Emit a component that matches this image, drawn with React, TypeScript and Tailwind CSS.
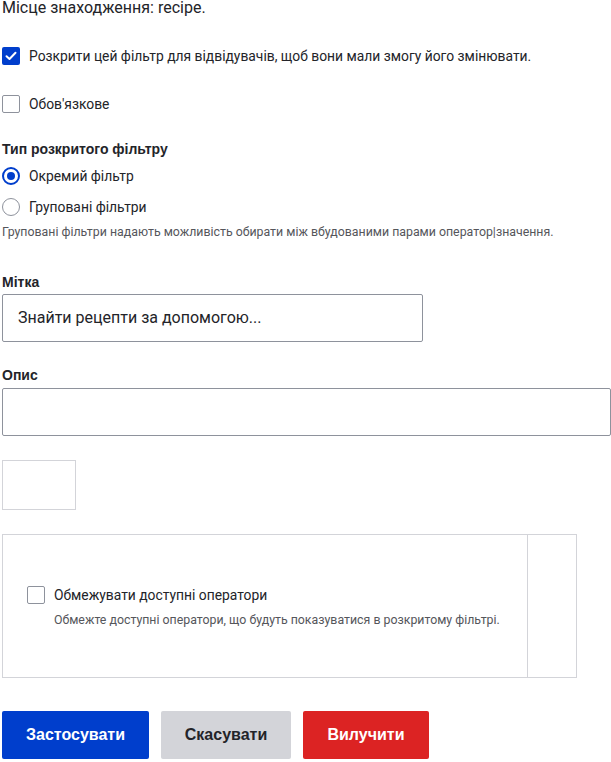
import React from "react";

const Checkbox: React.FC<{ checked?: boolean }> = ({ checked }) =>
  checked ? (
    <span className="flex h-[18px] w-[18px] shrink-0 items-center justify-center rounded-[2px] bg-[#003ecc]">
      <svg width="12" height="10" viewBox="0 0 12 10" fill="none">
        <path d="M1.5 5.2 4.5 8 10.5 1.8" stroke="#fff" strokeWidth="2" strokeLinecap="round" strokeLinejoin="round" />
      </svg>
    </span>
  ) : (
    <span className="block h-[18px] w-[18px] shrink-0 rounded-[2px] border border-[#8e929c] bg-white" />
  );

const Radio: React.FC<{ checked?: boolean }> = ({ checked }) =>
  checked ? (
    <span className="flex h-[18px] w-[18px] shrink-0 items-center justify-center rounded-full border-2 border-[#003ecc] bg-white">
      <span className="block h-2 w-2 rounded-full bg-[#003ecc]" />
    </span>
  ) : (
    <span className="block h-[18px] w-[18px] shrink-0 rounded-full border border-[#8e929c] bg-white" />
  );

export default function App() {
  return (
    <div className="flex w-[611px] flex-col bg-white pl-[2px] font-['Roboto',sans-serif] text-[#232429]">
      {/* location */}
      <div className="h-4 text-base leading-4">Місце знаходження: recipe.</div>

      {/* expose */}
      <label className="mt-[31px] flex h-[18px] items-center gap-[9px] text-[13.85px] leading-5">
        <Checkbox checked />
        <span>Розкрити цей фільтр для відвідувачів, щоб вони мали змогу його змінювати.</span>
      </label>

      <label className="mt-[30px] flex h-[18px] items-center gap-[9px] text-[13.85px] leading-5">
        <Checkbox />
        <span>Обов'язкове</span>
      </label>

      {/* filter type */}
      <div className="mt-[26px] h-5 font-['Liberation_Sans',Arial,sans-serif] text-sm font-bold leading-5">
        Тип розкритого фільтру
      </div>
      <label className="mt-2 flex h-[18px] items-center gap-[9px] text-[13.85px] leading-5">
        <Radio checked />
        <span>Окремий фільтр</span>
      </label>
      <label className="mt-[13px] flex h-[18px] items-center gap-[9px] text-[13.85px] leading-5">
        <Radio />
        <span>Груповані фільтри</span>
      </label>
      <div className="mt-2 h-4 text-[12.35px] leading-4 text-[#55565b]">
        Груповані фільтри надають можливість обирати між вбудованими парами оператор|значення.
      </div>

      {/* label */}
      <div className="mt-8 h-5 font-['Liberation_Sans',Arial,sans-serif] text-sm font-bold leading-5">Мітка</div>
      <div className="mt-[2px] flex h-12 w-[421px] items-center rounded-[2px] border border-[#8e929c] pl-[15px] text-base">
        Знайти рецепти за допомогою...
      </div>

      {/* description */}
      <div className="mt-[23px] h-5 font-['Liberation_Sans',Arial,sans-serif] text-sm font-bold leading-5">Опис</div>
      <div className="mt-[3px] h-12 w-[609px] rounded-[2px] border border-[#8e929c]" />

      <div className="mt-6 h-[50px] w-[74px] border border-[#d3d4d9]" />

      {/* operators */}
      <div className="mt-6 flex w-[575px] border border-[#d3d4d9]">
        <div className="flex-1 border-r border-[#d3d4d9] pb-[49px] pl-6 pt-[51px]">
          <label className="flex h-[18px] items-center gap-[9px] text-[13.85px] leading-5">
            <Checkbox />
            <span>Обмежувати доступні оператори</span>
          </label>
          <div className="mt-2 h-4 pl-[27px] text-[12.35px] leading-4 text-[#55565b]">
            Обмежте доступні оператори, що будуть показуватися в розкритому фільтрі.
          </div>
        </div>
        <div className="w-[48px]" />
      </div>

      {/* actions */}
      <div className="mt-[33px] flex gap-3 pb-[3px] font-['Liberation_Sans',Arial,sans-serif] text-base font-bold">
        <button className="h-12 w-[147px] rounded-[2px] bg-[#003ecc] text-white">Застосувати</button>
        <button className="h-12 w-[130px] rounded-[2px] bg-[#d3d4d9] text-[#232429]">Скасувати</button>
        <button className="h-12 w-[126px] rounded-[2px] bg-[#dc2323] text-white">Вилучити</button>
      </div>
    </div>
  );
}
